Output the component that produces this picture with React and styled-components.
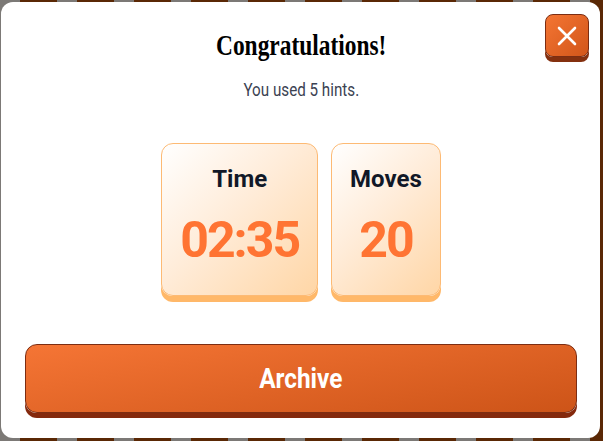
import React from 'react';
import styled, { createGlobalStyle } from 'styled-components';

const GlobalStyle = createGlobalStyle`
  html, body {
    margin: 0;
    padding: 0;
  }
  body {
    font-family: Roboto, "Liberation Sans", sans-serif;
  }
`;

const Backdrop = styled.div`
  width: 603px;
  height: 441px;
  box-sizing: border-box;
  padding: 2px 3px 3px 1px;
  display: flex;
  background-color: #7c7976;
  background-image: repeating-linear-gradient(
    90deg,
    #7c7976 0px,
    #7c7976 20px,
    #5a2805 20px,
    #5a2805 57px
  );
`;

const Modal = styled.div`
  flex: 1;
  position: relative;
  background: #ffffff;
  border-radius: 12px;
  padding: 26px 23px 25px 24px;
  display: flex;
  flex-direction: column;
  align-items: center;
`;

const CloseButton = styled.button`
  position: absolute;
  top: 12px;
  right: 11px;
  width: 44px;
  height: 43px;
  padding: 0;
  border: 1px solid #7c2d12;
  border-radius: 8px;
  background: linear-gradient(135deg, #f47533 0%, #d2561a 100%);
  box-shadow: 0 5px 0 #84300f;
  display: flex;
  align-items: center;
  justify-content: center;
  cursor: pointer;
`;

/* condensed look: the fonts we have are regular width, so squeeze them */
const Narrow = styled.span`
  display: inline-block;
  transform: scaleX(${(p) => p.$scale});
  transform-origin: center;
  white-space: nowrap;
`;

const Title = styled.h2`
  margin: 0;
  font-family: "Liberation Serif", "Times New Roman", serif;
  font-weight: 700;
  font-size: 30px;
  line-height: 34px;
  color: #000000;
`;

const Subtitle = styled.p`
  margin: 16px 0 0;
  font-family: Roboto, "Liberation Sans", sans-serif;
  font-weight: 400;
  font-size: 19px;
  line-height: 24px;
  color: #3b4252;
`;

const Stats = styled.div`
  margin-top: 41px;
  display: flex;
  gap: 13px;
  justify-content: center;
`;

const StatCard = styled.div`
  padding: 21px 18px 26px;
  border: 1px solid #fdba74;
  border-radius: 12px;
  background: linear-gradient(135deg, #ffffff 0%, #ffecd9 45%, #ffd6a6 100%);
  box-shadow: 0 6px 0 #ffb869;
  display: flex;
  flex-direction: column;
  align-items: center;
`;

const StatLabel = styled.div`
  font-family: Roboto, sans-serif;
  font-weight: 700;
  font-size: 24px;
  line-height: 28px;
  color: #111827;
`;

const StatValue = styled.div`
  margin-top: 18px;
  font-family: Roboto, sans-serif;
  font-weight: 700;
  font-size: 50px;
  line-height: 58px;
  letter-spacing: -2px;
  color: #ff7433;
`;

const ActionButton = styled.button`
  margin-top: 48px;
  align-self: stretch;
  height: 69px;
  border: 1px solid #7c2d12;
  border-radius: 12px;
  background: linear-gradient(170deg, #f57535 0%, #cd5418 100%);
  box-shadow: 0 5px 0 #84290d;
  color: #ffffff;
  font-family: Roboto, "Liberation Sans", sans-serif;
  font-weight: 700;
  font-size: 28px;
  cursor: pointer;
`;

const stats = [
  { label: 'Time', value: '02:35' },
  { label: 'Moves', value: '20' },
];

const CloseIcon = () => (
  <svg width="22" height="22" viewBox="0 0 22 22">
    <path d="M3 3 L19 19 M19 3 L3 19" stroke="#ffffff" strokeWidth="2.6" strokeLinecap="round" />
  </svg>
);

export default function App() {
  return (
    <>
      <GlobalStyle />
      <Backdrop>
        <Modal>
          <CloseButton aria-label="Close">
            <CloseIcon />
          </CloseButton>
          <Title>
            <Narrow $scale={0.78}>Congratulations!</Narrow>
          </Title>
          <Subtitle>
            <Narrow $scale={0.8}>You used 5 hints.</Narrow>
          </Subtitle>
          <Stats>
            {stats.map((s) => (
              <StatCard key={s.label}>
                <StatLabel>{s.label}</StatLabel>
                <StatValue>{s.value}</StatValue>
              </StatCard>
            ))}
          </Stats>
          <ActionButton>
            <Narrow $scale={0.87}>Archive</Narrow>
          </ActionButton>
        </Modal>
      </Backdrop>
    </>
  );
}
